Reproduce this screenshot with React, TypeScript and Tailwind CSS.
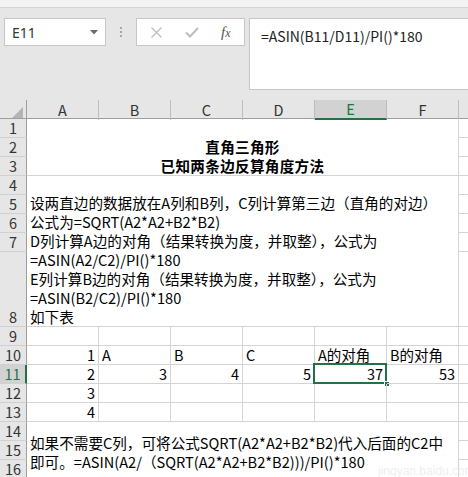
import React from 'react';

type Cell = { t: string; align: 'l' | 'r' };

const data: Record<number, Record<number, Cell>> = {
  10: {
    2: { t: '1', align: 'r' },
    3: { t: 'A', align: 'l' },
    4: { t: 'B', align: 'l' },
    5: { t: 'C', align: 'l' },
    6: { t: 'A的对角', align: 'l' },
    7: { t: 'B的对角', align: 'l' },
  },
  11: {
    2: { t: '2', align: 'r' },
    3: { t: '3', align: 'r' },
    4: { t: '4', align: 'r' },
    5: { t: '5', align: 'r' },
    6: { t: '37', align: 'r' },
    7: { t: '53', align: 'r' },
  },
  12: { 2: { t: '3', align: 'r' } },
  13: { 2: { t: '4', align: 'r' } },
};

const rowStart: Record<number, string> = {
  1: 'row-start-1', 2: 'row-start-2', 3: 'row-start-3', 4: 'row-start-4', 5: 'row-start-5',
  6: 'row-start-6', 7: 'row-start-7', 8: 'row-start-8', 9: 'row-start-9', 10: 'row-start-10',
  11: 'row-start-11', 12: 'row-start-12', 13: 'row-start-13', 14: 'row-start-14', 15: 'row-start-15', 16: 'row-start-16',
};
const colStart: Record<number, string> = {
  1: 'col-start-1', 2: 'col-start-2', 3: 'col-start-3', 4: 'col-start-4', 5: 'col-start-5',
  6: 'col-start-6', 7: 'col-start-7', 8: 'col-start-8',
};

export default function App() {
  const rows = Array.from({ length: 16 }, (_, i) => i + 1);
  const cells: React.ReactNode[] = [];

  rows.forEach((r) => {
    const sel = r === 11;
    cells.push(
      <div
        key={`h${r}`}
        className={`${rowStart[r]} col-start-1 flex items-end justify-center border-b border-[#d0d0d0] leading-[18px] text-[14.5px] ${
          sel
            ? 'bg-[#d2d2d2] text-[#217346] border-r-2 border-r-[#217346]'
            : 'bg-[#e6e6e6] text-[#333] border-r border-r-[#9e9e9e]'
        }`}
      >
        {r}
      </div>
    );
    cells.push(
      <div key={`g${r}`} className={`${rowStart[r]} col-start-8 border-b border-[#d4d4d4]`} />
    );
    if (r >= 9 && r <= 13) {
      for (let c = 2; c <= 7; c++) {
        const d = data[r]?.[c];
        const isSel = r === 11 && c === 6;
        cells.push(
          <div
            key={`c${r}-${c}`}
            className={`${rowStart[r]} ${colStart[c]} relative flex items-end border-r border-b border-[#d4d4d4] leading-[18px] text-[14.5px] px-[3px] ${
              d?.align === 'r' ? 'justify-end' : 'justify-start'
            }`}
          >
            {d && <span className="whitespace-nowrap">{d.t}</span>}
            {isSel && (
              <>
                <div className="absolute left-[-2px] top-[-2px] right-[-1px] bottom-[-1px] border-2 border-[#217346]" />
                <div className="absolute right-[-4px] bottom-[-4px] w-[6px] h-[6px] bg-[#217346] border border-white" />
              </>
            )}
          </div>
        );
      }
    }
  });

  return (
    <div className="relative w-[468px] h-[477px] overflow-hidden bg-white text-black font-['Noto_Sans_CJK_SC',sans-serif]">
      {/* ribbon remnant */}
      <div className="h-[8px] bg-[#f3f3f3] border-b border-[#d5d5d5] overflow-hidden">
        <div className="flex -mt-[14px] text-[12px] leading-[16px] text-[#555]">
          <span className="ml-[19px] shrink-0">显示比例</span>
          <span className="ml-[26px] shrink-0 text-[#888]">▫</span>
          <span className="ml-[300px] shrink-0">1:4739</span>
        </div>
      </div>

      {/* formula bar area */}
      <div className="h-[92px] bg-[#e6e6e6] flex items-start pt-[10px] overflow-hidden">
        <div className="shrink-0 ml-[4px] w-[102px] h-[28px] bg-white border border-[#c6c6c6] flex items-center justify-between pl-[7px] pr-[7px]">
          <span className="font-['Noto_Sans',sans-serif] text-[14px] text-[#333]">E11</span>
          <svg width="8" height="5" viewBox="0 0 8 5">
            <path d="M0 0 L8 0 L4 4.5 Z" fill="#6b6b6b" />
          </svg>
        </div>
        <div className="shrink-0 w-[30px] h-[28px] flex flex-col items-center justify-center gap-[2px]">
          <div className="w-[2px] h-[2px] bg-[#a6a6a6]" />
          <div className="w-[2px] h-[2px] bg-[#a6a6a6]" />
          <div className="w-[2px] h-[2px] bg-[#a6a6a6]" />
        </div>
        <div className="shrink-0 w-[109px] h-[28px] bg-white border border-[#c6c6c6] flex items-center">
          <svg className="ml-[14px]" width="11" height="11" viewBox="0 0 11 11">
            <path d="M0.5 0.5 L10.5 10.5 M10.5 0.5 L0.5 10.5" stroke="#bdbdbd" strokeWidth="1.3" />
          </svg>
          <svg className="ml-[23px]" width="14" height="11" viewBox="0 0 14 11">
            <path d="M1 5.5 L5 9.5 L13 1" stroke="#bdbdbd" strokeWidth="2" fill="none" />
          </svg>
          <span className="ml-[22px] font-['Liberation_Serif',serif] italic text-[15px] text-[#555] leading-none">
            f<span className="text-[12px]">x</span>
          </span>
        </div>
        <div className="shrink-0 ml-[4px] w-[230px] h-[72px] bg-white border border-[#c6c6c6] pl-[11px] pt-[4px]">
          <span className="text-[14px] leading-[20px] text-[#222] whitespace-nowrap">=ASIN(B11/D11)/PI()*180</span>
        </div>
      </div>

      {/* column header */}
      <div className="grid grid-cols-[27px_72px_72px_72px_72px_72px_72px_1fr] h-[19px] bg-[#e6e6e6] border-b border-[#9e9e9e]">
        <div className="border-r border-[#9e9e9e] flex items-end justify-end pr-[3px] pb-[2px]">
          <svg width="11" height="11" viewBox="0 0 11 11">
            <path d="M11 0 L11 11 L0 11 Z" fill="#b4b4b4" />
          </svg>
        </div>
        {['A', 'B', 'C', 'D', 'E', 'F'].map((l) =>
          l === 'E' ? (
            <div
              key={l}
              className="bg-[#d2d2d2] border-r border-[#bdbdbd] border-b-2 border-b-[#217346] flex items-center justify-center text-[14.5px] leading-[18px] text-[#217346]"
            >
              {l}
            </div>
          ) : (
            <div
              key={l}
              className="border-r border-[#bdbdbd] flex items-center justify-center text-[14.5px] leading-[18px] text-[#333]"
            >
              {l}
            </div>
          )
        )}
        <div />
      </div>

      {/* sheet */}
      <div className="grid grid-cols-[27px_72px_72px_72px_72px_72px_72px_1fr] grid-rows-[repeat(7,19px)_75px_repeat(8,19px)]">
        {cells}
        <div className="row-start-1 row-span-3 col-start-2 col-span-6 border-r border-b border-[#d4d4d4] flex flex-col justify-end items-center font-bold text-[14.6px] leading-[19px]">
          <div className="tracking-[0.3px]">直角三角形</div>
          <div className="tracking-[0.3px]">已知两条边反算角度方法</div>
        </div>
        <div className="row-start-4 row-span-5 col-start-2 col-span-6 border-r border-b border-[#d4d4d4] flex flex-col justify-end pl-[3px] text-[14.6px] leading-[19px] whitespace-nowrap">
          <div>设两直边的数据放在A列和B列，C列计算第三边（直角的对边）</div>
          <div>公式为=SQRT(A2*A2+B2*B2)</div>
          <div>D列计算A边的对角（结果转换为度，并取整），公式为</div>
          <div>=ASIN(A2/C2)/PI()*180</div>
          <div>E列计算B边的对角（结果转换为度，并取整），公式为</div>
          <div>=ASIN(B2/C2)/PI()*180</div>
          <div>如下表</div>
        </div>
        <div className="row-start-14 row-span-3 col-start-2 col-span-6 border-r border-[#d4d4d4] flex flex-col justify-start pt-[11px] pl-[3px] text-[14.6px] leading-[19px] whitespace-nowrap">
          <div>如果不需要C列，可将公式SQRT(A2*A2+B2*B2)代入后面的C2中</div>
          <div>即可。=ASIN(A2/（SQRT(A2*A2+B2*B2)))/PI()*180</div>
        </div>
      </div>

      {/* faint watermark */}
      <div className="absolute left-[378px] top-[465px] pointer-events-none text-[#efefef] text-[12px] leading-none font-['Liberation_Sans',sans-serif] whitespace-nowrap">
        jingyan.baidu.com
      </div>
    </div>
  );
}
